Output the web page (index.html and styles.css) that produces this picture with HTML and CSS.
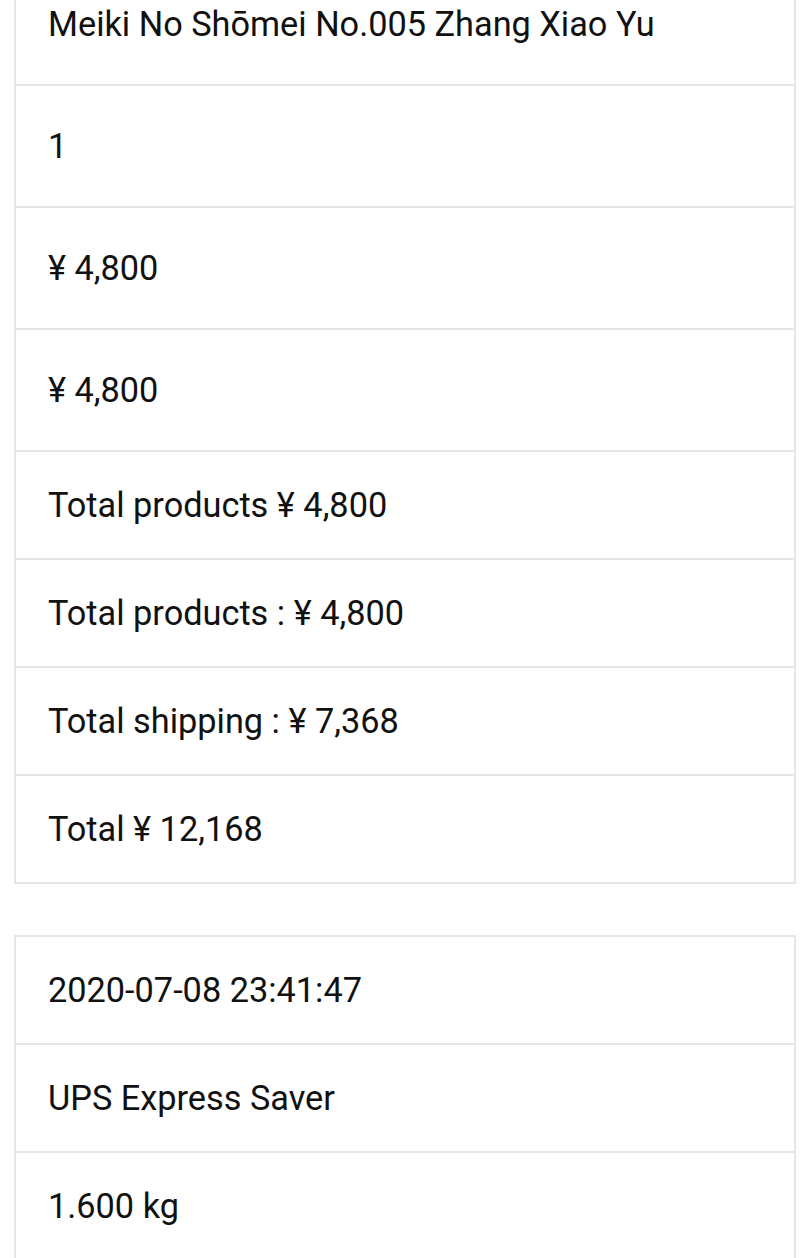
FILE: index.html
```html
<!DOCTYPE html>
<html lang="en">
<head>
<meta charset="utf-8">
<title>Order detail</title>
<link rel="stylesheet" href="styles.css">
</head>
<body>
<div class="page">
  <div class="table">
    <div class="cell tall">Meiki No Shōmei No.005 Zhang Xiao Yu</div>
    <div class="cell tall">1</div>
    <div class="cell tall">¥ 4,800</div>
    <div class="cell tall">¥ 4,800</div>
    <div class="cell">Total products ¥ 4,800</div>
    <div class="cell">Total products : ¥ 4,800</div>
    <div class="cell">Total shipping : ¥ 7,368</div>
    <div class="cell">Total ¥ 12,168</div>
  </div>
  <div class="table">
    <div class="cell">2020-07-08 23:41:47</div>
    <div class="cell">UPS Express Saver</div>
    <div class="cell">1.600 kg</div>
  </div>
</div>
</body>
</html>
```

FILE: styles.css
```css
html, body {
  margin: 0;
  padding: 0;
  background: #ffffff;
}

body {
  font-family: Roboto, "Liberation Sans", Arial, sans-serif;
  color: #111111;
  overflow: hidden;
}

.page {
  display: flex;
  flex-direction: column;
  gap: 51px;
  margin: -38px 13px 0 14px;
}

.table {
  display: flex;
  flex-direction: column;
  border: 2px solid #e6e6e6;
  border-bottom: none;
}

.cell {
  display: flex;
  align-items: center;
  height: 106px;
  padding: 0 32px;
  border-bottom: 2px solid #e6e6e6;
  font-size: 34.3px;
  line-height: 40px;
  white-space: nowrap;
}

.cell.tall {
  height: 120px;
}
```
